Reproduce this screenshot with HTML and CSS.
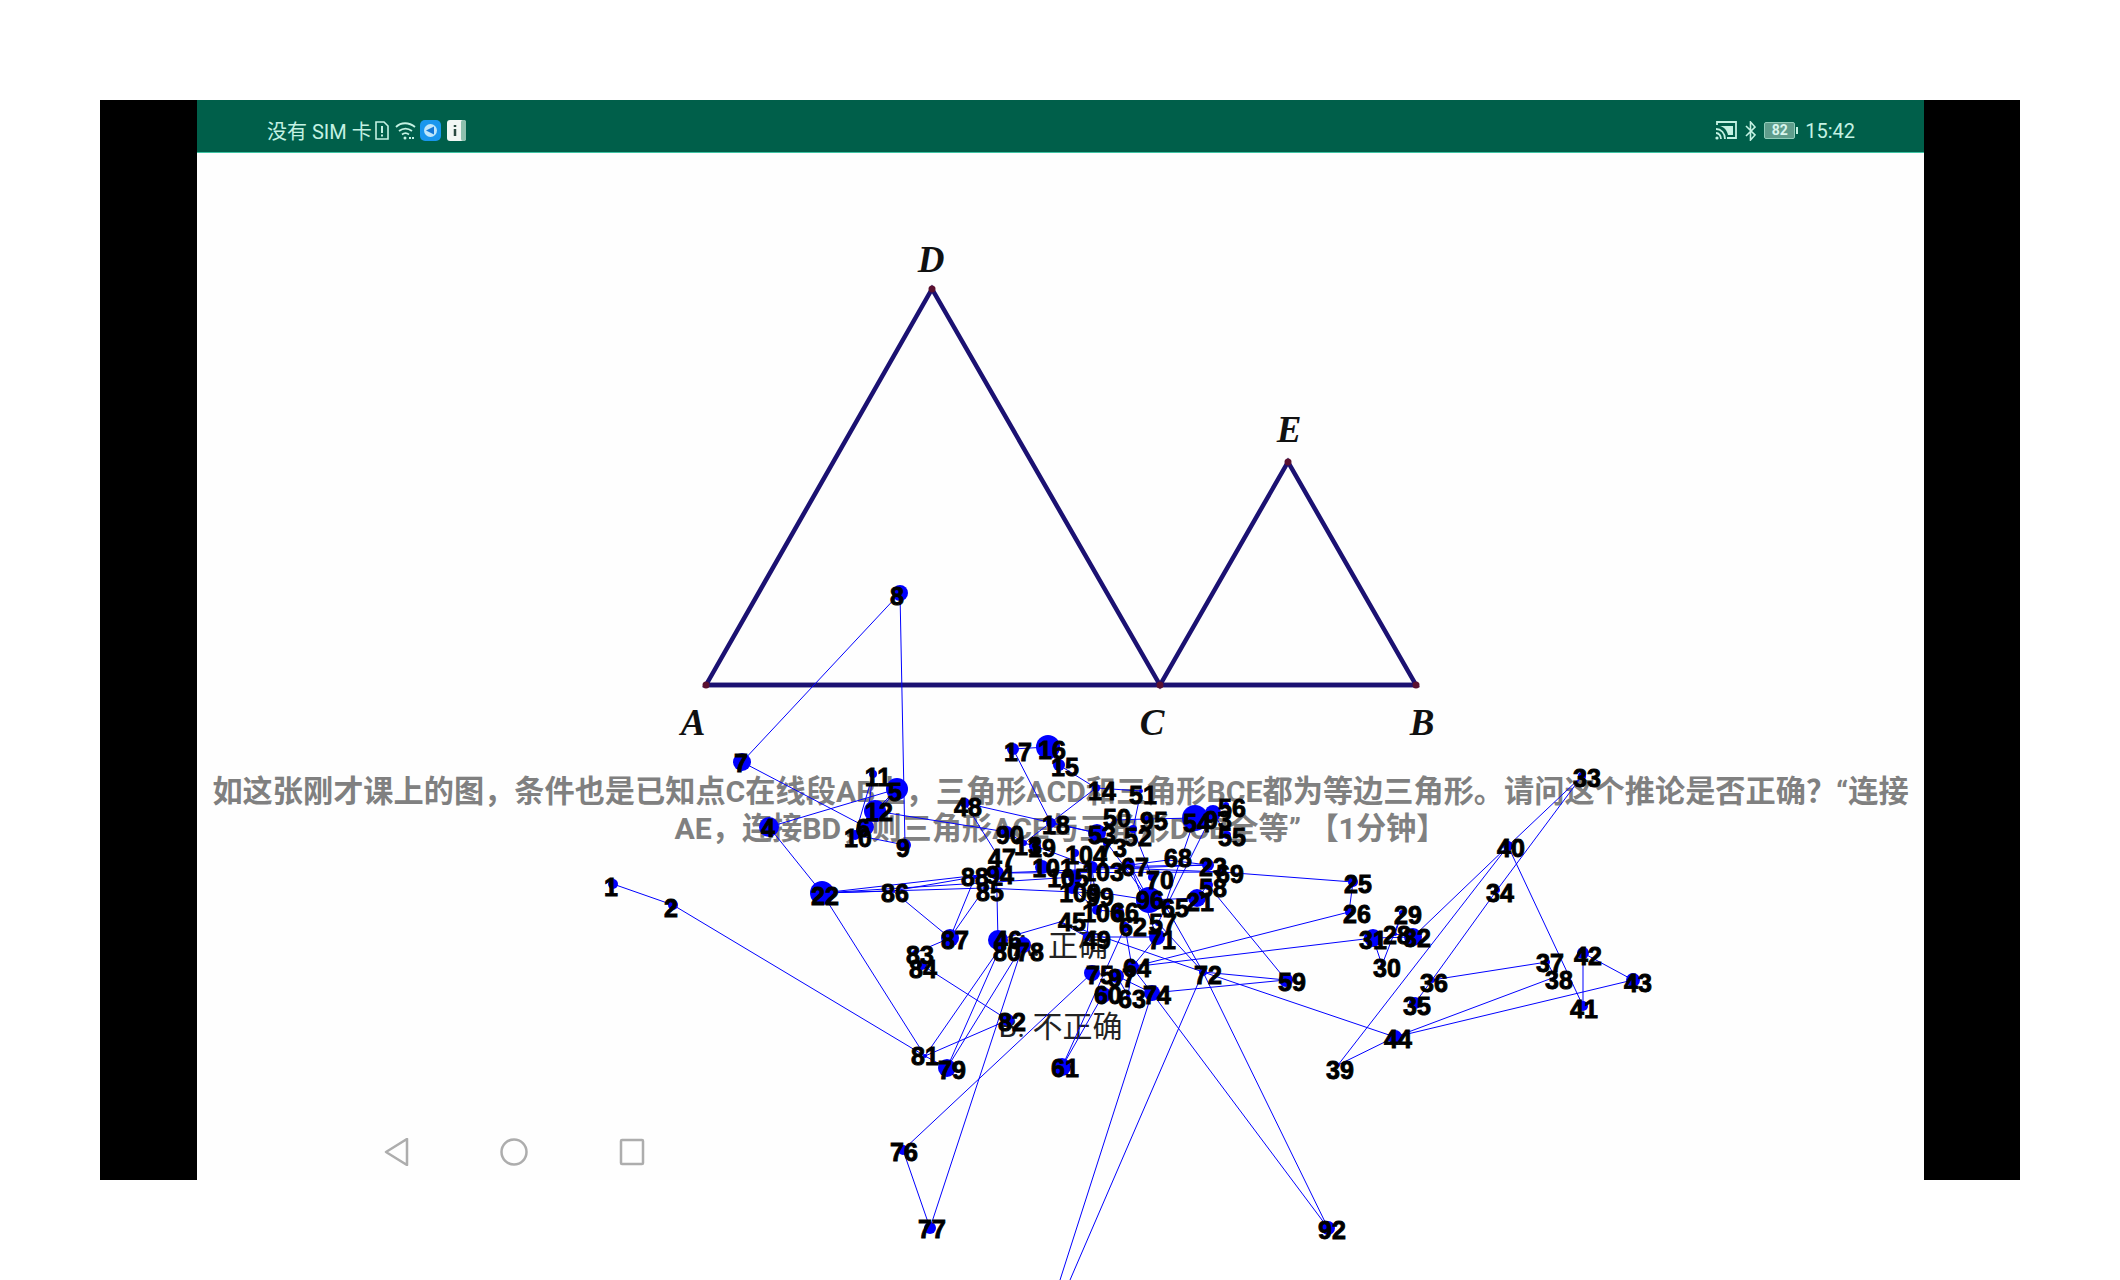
FILE: index.html
```html
<!DOCTYPE html>
<html lang="zh-CN">
<head>
<meta charset="UTF-8">
<title>等边三角形 推论判断</title>
<link rel="stylesheet" href="styles.css">
</head>
<body>

<div class="device">
  <div class="screen">
    <div class="status-bar">
      <div class="status-left">
        <span>没有 SIM 卡</span>
        <svg class="icon-sim" width="14" height="19" viewBox="0 0 14 19">
          <path d="M1 1h8l4 4v13H1z" fill="none" stroke="#c4f2e3" stroke-width="1.6"/>
          <path d="M7 5v7M7 13.500v2" stroke="#c4f2e3" stroke-width="2"/>
        </svg>
        <svg class="icon-wifi" width="21" height="19" viewBox="0 0 21 19">
          <path d="M1 6c5-5 13-5 19 0M4 10c4-3 9-3 13 0M7 13.500c2-1.500 5-1.500 7 0" fill="none" stroke="#c4f2e3" stroke-width="1.800"/>
          <circle cx="10" cy="17" r="1.500" fill="#c4f2e3"/>
          <path d="M14 17h6" stroke="#c4f2e3" stroke-width="2" stroke-dasharray="2 1"/>
        </svg>
        <svg class="icon-app" width="21" height="21" viewBox="0 0 21 21">
          <rect width="21" height="21" rx="5" fill="#1a96ee"/>
          <circle cx="10.500" cy="10.500" r="6.500" fill="#bfe6fb"/>
          <path d="M6 10.500l8-4v8z" fill="#1478d8"/>
        </svg>
        <svg class="icon-info" width="19" height="21" viewBox="0 0 19 21">
          <rect width="19" height="21" rx="3" fill="#f2f7f4"/>
          <rect x="14" width="5" height="21" rx="2" fill="#8fc0ae"/>
          <path d="M8 5v2M8 9v7" stroke="#2a4a40" stroke-width="2.500"/>
        </svg>
      </div>
      <div class="status-right">
        <svg class="icon-cast" width="22" height="19" viewBox="0 0 22 19">
          <path d="M2 4V1h19v16h-9" fill="none" stroke="#c4f2e3" stroke-width="1.800"/>
          <path d="M5 5h13v9h-5C12 9 9 6 5 5z" fill="#c4f2e3"/>
          <path d="M1 8c5 0 9 4 9 10M1 12c3 0 5 3 5 6" fill="none" stroke="#c4f2e3" stroke-width="1.800"/>
          <circle cx="2" cy="17" r="1.600" fill="#c4f2e3"/>
        </svg>
        <svg class="icon-bt" width="11" height="20" viewBox="0 0 11 20">
          <path d="M1 5l9 9-4.500 5V1L10 6l-9 9" fill="none" stroke="#c4f2e3" stroke-width="1.600"/>
        </svg>
        <div class="battery"><span class="battery-level">82</span></div>
        <span class="battery-tip"></span>
        <span class="clock">15:42</span>
      </div>
    </div>

    <div class="lesson">
      <svg class="figure" width="1727" height="620" viewBox="197 153 1727 620">
        <g class="figure-lines">
          <path d="M706 685L932 289L1160 685L1288 462L1416 685Z"/>
          <path d="M706 685H1416"/>
        </g>
        <g class="figure-pts">
          <circle cx="706" cy="685" r="3.500"/>
          <circle cx="932" cy="289" r="3.500"/>
          <circle cx="1160" cy="685" r="3.500"/>
          <circle cx="1288" cy="462" r="3.500"/>
          <circle cx="1416" cy="685" r="3.500"/>
        </g>
        <g class="figure-names">
          <text x="931" y="272">D</text>
          <text x="1289" y="442">E</text>
          <text x="693" y="735">A</text>
          <text x="1152" y="735">C</text>
          <text x="1422" y="735">B</text>
        </g>
      </svg>

      <p class="question">如这张刚才课上的图，条件也是已知点C在线段AB上，三角形ACD和三角形BCE都为等边三角形。请问这个推论是否正确？“连接AE，连接BD，则三角形ACE与三角形DCB全等” 【1分钟】</p>

      <div class="options">
        <div class="option">A. 正确</div>
        <div class="option">B. 不正确</div>
      </div>

      <div class="nav-bar">
        <svg width="28" height="28" viewBox="0 0 28 28"><path d="M25 1v26L4 14z"/></svg>
        <svg width="28" height="28" viewBox="0 0 28 28"><circle cx="14" cy="14" r="12.500"/></svg>
        <svg width="28" height="28" viewBox="0 0 28 28"><rect x="3" y="2" width="22" height="24" rx="1"/></svg>
      </div>
    </div>
  </div>
</div>

<svg id="strokes" class="strokes" width="2120" height="1280"></svg>

<script src="graph.js"></script>
</body>
</html>
```

FILE: styles.css
```css
body {
  margin: 0;
  width: 2120px;
  height: 1280px;
  background-color: #ffffff;
  overflow: hidden;
  position: relative;
  font-family: Roboto, "Noto Sans CJK SC", sans-serif;
}
.device {
  margin: 100px 100px 0;
  height: 1080px;
  background-color: #000000;
  display: flex;
  justify-content: center;
  padding-left: 1px;
}
.screen {
  width: 1727px;
  display: flex;
  flex-direction: column;
  background-color: #fefefe;
}
.status-bar {
  height: 53px;
  box-sizing: border-box;
  flex: none;
  display: flex;
  align-items: center;
  justify-content: space-between;
  padding: 9px 69px 0 70px;
  background-color: #005f4a;
  border-bottom: 1px solid #3fc4a4;
  color: #c4f2e3;
  font-size: 20px;
}
.status-left, .status-right {
  display: flex;
  align-items: center;
}
.icon-sim { margin-left: 3px; }
.icon-wifi { margin-left: 6px; }
.icon-app { margin-left: 4px; }
.icon-info { margin-left: 6px; }
.icon-bt { margin-left: 8px; }
.battery {
  width: 29px;
  height: 15px;
  margin-left: 8px;
  border: 1px solid #8fcdb9;
  border-radius: 2px;
  background-color: #5f9d8c;
  display: flex;
  align-items: center;
  justify-content: center;
}
.battery-level {
  font-size: 14px;
  font-weight: 700;
  color: #d8f5ec;
  line-height: 15px;
}
.battery-tip {
  width: 2px;
  height: 7px;
  margin-left: 1px;
  background-color: #c4f2e3;
}
.clock {
  margin-left: 7px;
}
.lesson {
  flex: 1;
  display: flex;
  flex-direction: column;
  align-items: center;
}
.figure {
  display: block;
  flex: none;
}
.figure-lines path {
  fill: none;
  stroke: #1b1172;
  stroke-width: 4.500;
  stroke-linejoin: miter;
  filter: blur(0.7px);
}
.figure-pts circle {
  fill: #5a1030;
}
.figure-names text {
  font-family: "Liberation Serif", serif;
  font-size: 37px;
  font-weight: bold;
  font-style: italic;
  text-anchor: middle;
  fill: #111111;
}
.question {
  margin: 0;
  padding: 0 10px;
  font-size: 30.200px;
  font-weight: 700;
  line-height: 37px;
  color: #808080;
  text-align: center;
}
.options {
  margin-top: 79px;
  display: flex;
  flex-direction: column;
  align-items: center;
  gap: 41px;
}
.option {
  font-size: 30px;
  line-height: 40px;
  color: #222222;
}
.nav-bar {
  margin-top: auto;
  align-self: flex-start;
  display: flex;
  gap: 90px;
  padding: 0 0 14px 185px;
}
.nav-bar svg {
  display: block;
  fill: none;
  stroke: #adadad;
  stroke-width: 2.500;
  stroke-linejoin: round;
}
.strokes {
  position: absolute;
  left: 0;
  top: 0;
}
.strokes line {
  stroke: #0000ff;
  stroke-width: 1;
}
.strokes circle {
  fill: #0000ff;
}
.strokes text {
  font-family: "Liberation Sans", sans-serif;
  font-size: 25px;
  font-weight: bold;
  fill: #000000;
  stroke: #000000;
  stroke-width: 0.900;
  text-anchor: middle;
  dominant-baseline: central;
}
```

FILE: graph.js
```js
// label, label x, label y, dot x, dot y, dot radius
var nodes = [
  ["1", 611, 887, 613, 884, 5], ["2", 671, 908, 673, 905, 5],
  ["4", 768, 828, 769, 827, 10], ["5", 895, 792, 897, 789, 11],
  ["6", 863, 828, 866, 827, 8], ["7", 741, 763, 742, 762, 9],
  ["8", 897, 596, 900, 593, 8], ["9", 903, 848, 905, 845, 6],
  ["10", 858, 838, 855, 835, 5], ["11", 878, 777, 873, 774, 4],
  ["12", 879, 812, 875, 811, 11], ["53", 1102, 835, 1097, 833, 9],
  ["14", 1102, 791, 1096, 788, 4], ["15", 1065, 767, 1059, 765, 6],
  ["16", 1052, 750, 1048, 747, 12], ["17", 1018, 752, 1013, 749, 6],
  ["18", 1056, 825, 1051, 823, 5], ["19", 1042, 848, 1035, 846, 6],
  ["13", 1028, 846, 1024, 843, 3], ["21", 1200, 902, 1197, 898, 9],
  ["22", 825, 896, 822, 893, 12], ["23", 1213, 867, 1208, 865, 6],
  ["25", 1358, 884, 1353, 882, 5], ["26", 1357, 914, 1349, 912, 4],
  ["28", 1397, 935, 1395, 934, 2], ["29", 1408, 915, 1402, 913, 3],
  ["30", 1387, 968, 1382, 965, 2], ["31", 1373, 940, 1373, 938, 9],
  ["32", 1417, 938, 1413, 937, 9], ["33", 1587, 778, 1582, 776, 4],
  ["34", 1500, 893, 1497, 890, 3], ["35", 1417, 1006, 1415, 1003, 6],
  ["36", 1434, 983, 1432, 980, 3], ["37", 1550, 963, 1547, 962, 3],
  ["38", 1559, 980, 1555, 977, 2], ["39", 1340, 1070, 1338, 1065, 2],
  ["40", 1511, 848, 1508, 846, 5], ["41", 1584, 1009, 1583, 1006, 5],
  ["42", 1588, 956, 1583, 953, 6], ["43", 1638, 983, 1633, 980, 7],
  ["44", 1398, 1039, 1395, 1037, 7], ["45", 1072, 922, 1060, 922, 1],
  ["46", 1008, 940, 998, 940, 10], ["47", 1002, 858, 996, 853, 2],
  ["48", 968, 807, 965, 803, 5], ["49", 1097, 940, 1087, 937, 4],
  ["50", 1117, 818, 1115, 820, 2], ["51", 1143, 795, 1141, 791, 2],
  ["52", 1138, 837, 1133, 829, 4], ["54", 1197, 823, 1195, 818, 13],
  ["55", 1232, 837, 1227, 835, 4], ["56", 1232, 808, 1226, 805, 3],
  ["57", 1163, 923, 1158, 923, 3], ["58", 1213, 888, 1208, 885, 5],
  ["59", 1292, 982, 1286, 980, 7], ["60", 1108, 995, 1103, 995, 8],
  ["61", 1065, 1068, 1062, 1067, 9], ["62", 1133, 927, 1125, 927, 5],
  ["63", 1132, 999, 1128, 996, 2], ["64", 1137, 968, 1132, 967, 7],
  ["65", 1175, 908, 1165, 905, 5], ["67", 1135, 867, 1130, 865, 5],
  ["68", 1178, 858, 1168, 860, 2], ["69", 1230, 874, 1222, 872, 4],
  ["70", 1160, 880, 1152, 877, 4], ["71", 1162, 940, 1157, 937, 8],
  ["72", 1208, 975, 1203, 972, 4], ["74", 1157, 995, 1152, 993, 8],
  ["75", 1100, 975, 1092, 973, 8], ["76", 904, 1152, 903, 1150, 5],
  ["77", 932, 1229, 930, 1228, 6], ["78", 1030, 952, 1023, 945, 8],
  ["79", 952, 1070, 947, 1068, 9], ["80", 1007, 952, 1000, 948, 5],
  ["81", 925, 1056, 925, 1056, 2], ["82", 1012, 1022, 1008, 1020, 6],
  ["83", 920, 955, 915, 953, 3], ["84", 923, 969, 922, 965, 5],
  ["85", 990, 892, 985, 888, 2], ["86", 895, 893, 893, 891, 2],
  ["87", 955, 940, 950, 938, 9], ["88", 975, 877, 975, 877, 2],
  ["94", 1000, 875, 997, 873, 7], ["90", 1010, 835, 1007, 832, 6],
  ["92", 1332, 1230, 1328, 1228, 7], ["93", 1218, 820, 1213, 813, 8],
  ["95", 1154, 821, 1147, 819, 3], ["96", 1150, 900, 1149, 900, 13],
  ["97", 1122, 978, 1117, 976, 7], ["99", 1100, 897, 1096, 893, 2],
  ["101", 1053, 868, 1042, 867, 7], ["103", 1103, 872, 1092, 867, 6],
  ["104", 1086, 855, 1075, 853, 4], ["106", 1103, 913, 1097, 910, 5],
  ["66", 1125, 912, 1118, 912, 6], ["109", 1080, 893, 1072, 888, 6],
  ["105", 1068, 878, 1075, 877, 7], ["73", 1113, 848, 1107, 843, 4]
];

var edges = [
  "1-2", "2-81", "81-22", "22-4", "4-5", "5-12", "5-6", "8-7", "8-9", "7-6",
  "6-11", "10-11", "9-10", "12-90", "48-53", "48-47", "90-13", "13-14", "14-15",
  "15-16", "16-17", "17-18", "18-53", "19-103", "19-13", "101-105", "105-109",
  "22-86", "86-87", "87-88", "87-85", "83-87", "84-82", "82-81", "81-79", "79-80",
  "79-78", "81-80", "22-94", "22-85", "22-105", "86-94", "85-99", "94-23", "94-69",
  "109-96", "103-23", "103-69", "25-69", "25-26", "26-64", "31-64", "31-30", "30-29",
  "29-28", "28-32", "32-31", "32-40", "40-33", "33-34", "34-36", "36-35", "36-37",
  "37-38", "38-44", "40-41", "41-42", "42-43", "43-44", "44-39", "39-40", "44-72",
  "72-59", "59-74", "72-92", "74-92", "58-59", "58-21", "21-96", "96-65", "65-72",
  "57-72", "93-57", "93-55", "93-56", "54-95", "54-65", "95-50", "52-70", "52-51",
  "51-14", "50-53", "67-96", "67-68", "68-23", "67-71", "70-96", "73-96", "73-53",
  "47-46", "46-45", "45-72", "45-49", "49-71", "103-49", "103-106", "106-66", "66-62",
  "62-64", "64-71", "64-74", "61-60", "61-62", "75-76", "76-77", "77-78", "75-97",
  "97-74", "97-63", "63-64", "46-80", "104-105", "109-106"
];

var svgNS = "http://www.w3.org/2000/svg";
var strokes = document.getElementById("strokes");
var byLabel = {};

function addEl(name, attrs, text) {
  var el = document.createElementNS(svgNS, name);
  for (var key in attrs) {
    el.setAttribute(key, attrs[key]);
  }
  if (text) {
    el.textContent = text;
  }
  strokes.appendChild(el);
}

nodes.forEach(function(n) {
  byLabel[n[0]] = n;
});

edges.forEach(function(e) {
  var parts = e.split("-");
  var a = byLabel[parts[0]];
  var b = byLabel[parts[1]];
  addEl("line", { x1: a[3], y1: a[4], x2: b[3], y2: b[4] });
});

// these two run off the bottom of the page
addEl("line", { x1: 1152, y1: 993, x2: 1060, y2: 1280 });
addEl("line", { x1: 1203, y1: 972, x2: 1070, y2: 1280 });

nodes.forEach(function(n) {
  addEl("circle", { cx: n[3], cy: n[4], r: n[5] });
});
nodes.forEach(function(n) {
  addEl("text", { x: n[1], y: n[2] }, n[0]);
});
```
